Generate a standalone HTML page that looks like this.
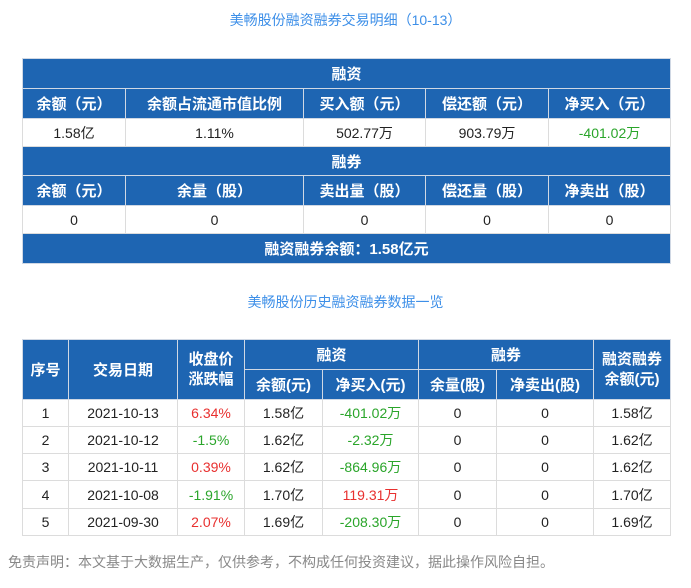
<!DOCTYPE html>
<html><head><meta charset="utf-8"><style>
body{margin:0;width:691px;height:588px;background:#fff;font-family:"Liberation Sans","Noto Sans CJK SC",sans-serif;position:relative;overflow:hidden}
.t{position:absolute;left:0;width:691px;text-align:center;color:#3d8fe8;font-size:14px}
table{position:absolute;border-collapse:collapse;table-layout:fixed;font-size:14px;color:#222}
td{border:1px solid #dcdcdc;text-align:center;padding:0;overflow:hidden;white-space:nowrap}
td.h{background:#1e65b2;color:#fff;font-weight:bold;border-color:#d0d8e4;font-size:15px}
.g{color:#2aa52a}.r{color:#e8302f}
</style></head><body>
<div class="t" style="top:10px">美畅股份融资融券交易明细（10-13）</div>
<table style="left:22px;top:58px;width:648px">
<colgroup><col style="width:103px"><col style="width:178px"><col style="width:122px"><col style="width:123px"><col style="width:122px"></colgroup>
<tr style="height:30px"><td class="h" colspan="5">融资</td></tr>
<tr style="height:30px"><td class="h">余额（元）</td><td class="h">余额占流通市值比例</td><td class="h">买入额（元）</td><td class="h">偿还额（元）</td><td class="h">净买入（元）</td></tr>
<tr style="height:28px"><td>1.58亿</td><td>1.11%</td><td>502.77万</td><td>903.79万</td><td class="g">-401.02万</td></tr>
<tr style="height:29px"><td class="h" colspan="5">融券</td></tr>
<tr style="height:30px"><td class="h">余额（元）</td><td class="h">余量（股）</td><td class="h">卖出量（股）</td><td class="h">偿还量（股）</td><td class="h">净卖出（股）</td></tr>
<tr style="height:28px"><td>0</td><td>0</td><td>0</td><td>0</td><td>0</td></tr>
<tr style="height:30px"><td class="h" colspan="5">融资融券余额：1.58亿元</td></tr>
</table>
<div class="t" style="top:292px">美畅股份历史融资融券数据一览</div>
<table style="left:22px;top:339px;width:648px">
<colgroup><col style="width:46px"><col style="width:109px"><col style="width:67px"><col style="width:78px"><col style="width:96px"><col style="width:78px"><col style="width:97px"><col style="width:77px"></colgroup>
<tr style="height:30px"><td class="h" rowspan="2">序号</td><td class="h" rowspan="2">交易日期</td><td class="h" rowspan="2" style="line-height:20px">收盘价<br>涨跌幅</td><td class="h" colspan="2">融资</td><td class="h" colspan="2">融券</td><td class="h" rowspan="2" style="line-height:20px">融资融券<br>余额(元)</td></tr>
<tr style="height:30px"><td class="h">余额(元)</td><td class="h">净买入(元)</td><td class="h">余量(股)</td><td class="h">净卖出(股)</td></tr>
<tr style="height:27px"><td>1</td><td>2021-10-13</td><td class="r">6.34%</td><td>1.58亿</td><td class="g">-401.02万</td><td>0</td><td>0</td><td>1.58亿</td></tr>
<tr style="height:27px"><td>2</td><td>2021-10-12</td><td class="g">-1.5%</td><td>1.62亿</td><td class="g">-2.32万</td><td>0</td><td>0</td><td>1.62亿</td></tr>
<tr style="height:27px"><td>3</td><td>2021-10-11</td><td class="r">0.39%</td><td>1.62亿</td><td class="g">-864.96万</td><td>0</td><td>0</td><td>1.62亿</td></tr>
<tr style="height:28px"><td>4</td><td>2021-10-08</td><td class="g">-1.91%</td><td>1.70亿</td><td class="r">119.31万</td><td>0</td><td>0</td><td>1.70亿</td></tr>
<tr style="height:27px"><td>5</td><td>2021-09-30</td><td class="r">2.07%</td><td>1.69亿</td><td class="g">-208.30万</td><td>0</td><td>0</td><td>1.69亿</td></tr>
</table>
<div style="position:absolute;left:8px;top:552px;font-size:14px;color:#888">免责声明：本文基于大数据生产，仅供参考，不构成任何投资建议，据此操作风险自担。</div>
</body></html>
